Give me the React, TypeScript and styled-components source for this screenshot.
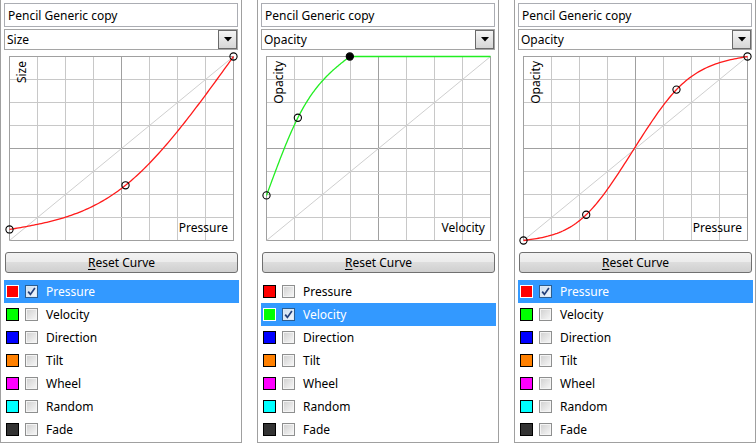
import React from 'react'
import styled, { createGlobalStyle } from 'styled-components'

type Pt = [number, number]

interface PanelData {
  name: string
  curve: string
  input: string
  color: string
  points: Pt[]
  selectedPoint?: number
  active: number
  checked: number
}

const SENSORS = [
  { label: 'Pressure', color: '#ff0000' },
  { label: 'Velocity', color: '#00ff00' },
  { label: 'Direction', color: '#0000ff' },
  { label: 'Tilt', color: '#ff8000' },
  { label: 'Wheel', color: '#ff00ff' },
  { label: 'Random', color: '#00ffff' },
  { label: 'Fade', color: '#333333' },
]

const PANELS: PanelData[] = [
  {
    name: 'Pencil Generic copy',
    curve: 'Size',
    input: 'Pressure',
    color: '#ff1a1a',
    points: [[0, 0.06], [0.518, 0.3], [1, 1]],
    active: 0,
    checked: 0,
  },
  {
    name: 'Pencil Generic copy',
    curve: 'Opacity',
    input: 'Velocity',
    color: '#22ee22',
    points: [[0, 0.245], [0.14, 0.667], [0.372, 1]],
    selectedPoint: 2,
    active: 1,
    checked: 1,
  },
  {
    name: 'Pencil Generic copy',
    curve: 'Opacity',
    input: 'Pressure',
    color: '#ff1a1a',
    points: [[0, 0], [0.28, 0.14], [0.683, 0.82], [1, 1]],
    active: 0,
    checked: 0,
  },
]

const GW = 225
const GH = 185

// natural cubic spline through the control points, sampled
function sampleCurve(pts: Pt[]): Pt[] {
  const n = pts.length
  const xs = pts.map((p) => p[0])
  const ys = pts.map((p) => p[1])
  const h: number[] = []
  for (let i = 0; i < n - 1; i++) h.push(xs[i + 1] - xs[i])
  const m = new Array(n).fill(0)
  if (n > 2) {
    const a: number[] = []
    const b: number[] = []
    const c: number[] = []
    const d: number[] = []
    for (let i = 1; i < n - 1; i++) {
      a.push(h[i - 1])
      b.push(2 * (h[i - 1] + h[i]))
      c.push(h[i])
      d.push(6 * ((ys[i + 1] - ys[i]) / h[i] - (ys[i] - ys[i - 1]) / h[i - 1]))
    }
    const k = b.length
    for (let i = 1; i < k; i++) {
      const w = a[i] / b[i - 1]
      b[i] -= w * c[i - 1]
      d[i] -= w * d[i - 1]
    }
    const sol = new Array(k).fill(0)
    sol[k - 1] = d[k - 1] / b[k - 1]
    for (let i = k - 2; i >= 0; i--) sol[i] = (d[i] - c[i] * sol[i + 1]) / b[i]
    for (let i = 0; i < k; i++) m[i + 1] = sol[i]
  }
  const out: Pt[] = []
  if (xs[0] > 0) out.push([0, ys[0]])
  const steps = 120
  for (let s = 0; s <= steps; s++) {
    const x = xs[0] + ((xs[n - 1] - xs[0]) * s) / steps
    let i = 0
    while (i < n - 2 && x > xs[i + 1]) i++
    const hi = h[i]
    const A = xs[i + 1] - x
    const B = x - xs[i]
    let y =
      (m[i] * A * A * A) / (6 * hi) +
      (m[i + 1] * B * B * B) / (6 * hi) +
      ((ys[i] - (m[i] * hi * hi) / 6) * A) / hi +
      ((ys[i + 1] - (m[i + 1] * hi * hi) / 6) * B) / hi
    y = Math.max(0, Math.min(1, y))
    out.push([x, y])
  }
  if (xs[n - 1] < 1) out.push([1, ys[n - 1]])
  return out
}

const px = (x: number) => 0.5 + x * (GW - 1)
const py = (y: number) => 0.5 + (1 - y) * (GH - 1)

const CurveGraph: React.FC<{ data: PanelData }> = ({ data }) => {
  const lines = [1, 2, 3, 4, 5, 6, 7]
  const path = sampleCurve(data.points)
    .map((p, i) => `${i ? 'L' : 'M'}${px(p[0]).toFixed(2)} ${py(p[1]).toFixed(2)}`)
    .join(' ')
  return (
    <Graph width={GW} height={GH} viewBox={`0 0 ${GW} ${GH}`}>
      <rect x={0} y={0} width={GW} height={GH} fill="#fff" />
      <g shapeRendering="crispEdges" strokeWidth={1}>
        {lines.map((i) => {
          const x = Math.round(((GW - 1) * i) / 8) + 0.5
          const y = Math.round(((GH - 1) * i) / 8) + 0.5
          const stroke = i === 4 ? '#a0a0a0' : '#c8c8c8'
          return (
            <React.Fragment key={i}>
              <line x1={x} y1={0} x2={x} y2={GH} stroke={stroke} />
              <line x1={0} y1={y} x2={GW} y2={y} stroke={stroke} />
            </React.Fragment>
          )
        })}
        <rect x={0.5} y={0.5} width={GW - 1} height={GH - 1} fill="none" stroke="#a0a0a0" />
      </g>
      <line x1={px(0)} y1={py(0)} x2={px(1)} y2={py(1)} stroke="#cfcfcf" strokeWidth={1} />
      <text className="axis" transform={`translate(${17}, 5) rotate(-90)`} textAnchor="end">
        {data.curve}
      </text>
      <text className="axis" x={GW - 6} y={GH - 9} textAnchor="end">
        {data.input}
      </text>
      <path d={path} fill="none" stroke={data.color} strokeWidth={1.3} />
      {data.points.map((p, i) => (
        <circle
          key={i}
          cx={px(p[0])}
          cy={py(p[1])}
          r={3.6}
          fill={i === data.selectedPoint ? '#000' : 'none'}
          stroke="#000"
          strokeWidth={1.1}
        />
      ))}
    </Graph>
  )
}

const CheckMark = () => (
  <svg width="11" height="11" viewBox="0 0 11 11">
    <path d="M2.2 5.6 L4.4 8.4 L8.9 2" fill="none" stroke="#23407a" strokeWidth="1.7" />
  </svg>
)

const CurvePanel: React.FC<{ data: PanelData }> = ({ data }) => (
  <Panel>
    <NameInput readOnly value={data.name} />
    <Combo>
      <span>{data.curve}</span>
      <ComboButton>
        <svg width="8" height="5" viewBox="0 0 8 5">
          <polygon points="0,0 8,0 4,4.5" fill="#000" />
        </svg>
      </ComboButton>
    </Combo>
    <GraphBox>
      <CurveGraph data={data} />
    </GraphBox>
    <ResetButton>
      <u>R</u>eset Curve
    </ResetButton>
    <SensorList>
      {SENSORS.map((s, i) => (
        <SensorRow key={s.label} $active={i === data.active}>
          <Swatch $color={s.color} $active={i === data.active} />
          <CheckBox $active={i === data.active}>{i === data.checked && <CheckMark />}</CheckBox>
          <SensorLabel>{s.label}</SensorLabel>
        </SensorRow>
      ))}
    </SensorList>
  </Panel>
)

const App: React.FC = () => (
  <>
    <GlobalStyle />
    <Page>
      {PANELS.map((p, i) => (
        <CurvePanel key={i} data={p} />
      ))}
    </Page>
  </>
)

const GlobalStyle = createGlobalStyle`
  html, body {
    margin: 0;
    padding: 0;
    background: #ffffff;
  }
  body {
    font-family: "Noto Sans", "Open Sans", sans-serif;
    font-size: 12px;
    color: #000;
  }
`

const Page = styled.div`
  display: flex;
  align-items: flex-start;
  gap: 15px;
  width: 756px;
  height: 445px;
  overflow: hidden;
`

const Panel = styled.section`
  display: flex;
  flex-direction: column;
  box-sizing: border-box;
  width: 242px;
  height: 443px;
  flex: none;
  padding: 3px 3px 0;
  border: 1px solid #a0a0a0;
  border-top: none;
`

const NameInput = styled.input`
  box-sizing: border-box;
  height: 24px;
  margin: 0 0 2px;
  padding: 0 3px;
  border: 1px solid #abadb3;
  font: inherit;
  color: #000;
  outline: none;
  background: #fff;
`

const Combo = styled.div`
  display: flex;
  align-items: center;
  justify-content: space-between;
  box-sizing: border-box;
  height: 21px;
  margin-bottom: 6px;
  padding-left: 2px;
  border: 1px solid #a5a5a5;
`

const ComboButton = styled.div`
  display: flex;
  align-items: center;
  justify-content: center;
  box-sizing: border-box;
  width: 19px;
  height: 19px;
  border: 1px solid #6a6a6a;
  background: linear-gradient(#f4f4f4, #d6d6d6);
`

const GraphBox = styled.div`
  height: ${GH}px;
  margin: 0 4px 11px 5px;
`

const Graph = styled.svg`
  display: block;
  overflow: visible;

  .axis {
    font-family: "Noto Sans", "Open Sans", sans-serif;
    font-size: 12px;
    fill: #000;
  }
`

const ResetButton = styled.button`
  box-sizing: border-box;
  height: 21px;
  margin: 0 0 7px 1px;
  padding: 0;
  border: 1px solid #707070;
  border-radius: 3px;
  background: linear-gradient(#f2f2f2 0%, #ebebeb 50%, #dddddd 50%, #cfcfcf 100%);
  font: inherit;
  color: #000;

  u {
    text-underline-offset: 2px;
  }
`

const SensorList = styled.div`
  display: flex;
  flex-direction: column;
`

const SensorRow = styled.div<{ $active: boolean }>`
  display: flex;
  align-items: center;
  height: 23px;
  margin-right: -1px;
  background: ${(p) => (p.$active ? '#3399ff' : 'transparent')};
  color: ${(p) => (p.$active ? '#ffffff' : '#000000')};
`

const Swatch = styled.span<{ $color: string; $active: boolean }>`
  box-sizing: border-box;
  width: 13px;
  height: 13px;
  margin-left: 2px;
  border: 1px solid ${(p) => (p.$active ? '#ffffff' : '#000000')};
  background: ${(p) => p.$color};
`

const CheckBox = styled.span<{ $active: boolean }>`
  display: flex;
  align-items: center;
  justify-content: center;
  box-sizing: border-box;
  width: 13px;
  height: 13px;
  margin-left: 6px;
  border: 1px solid ${(p) => (p.$active ? '#2c5d8f' : '#8e8f8f')};
  box-shadow: inset 0 0 0 1px ${(p) => (p.$active ? '#dbe9f7' : '#f4f4f4')};
  background: ${(p) =>
    p.$active
      ? 'linear-gradient(135deg, #c9dcef, #f4f8fc)'
      : 'linear-gradient(135deg, #cfcfcf, #f8f8f8)'};
`

const SensorLabel = styled.span`
  margin-left: 8px;
`

export default App
